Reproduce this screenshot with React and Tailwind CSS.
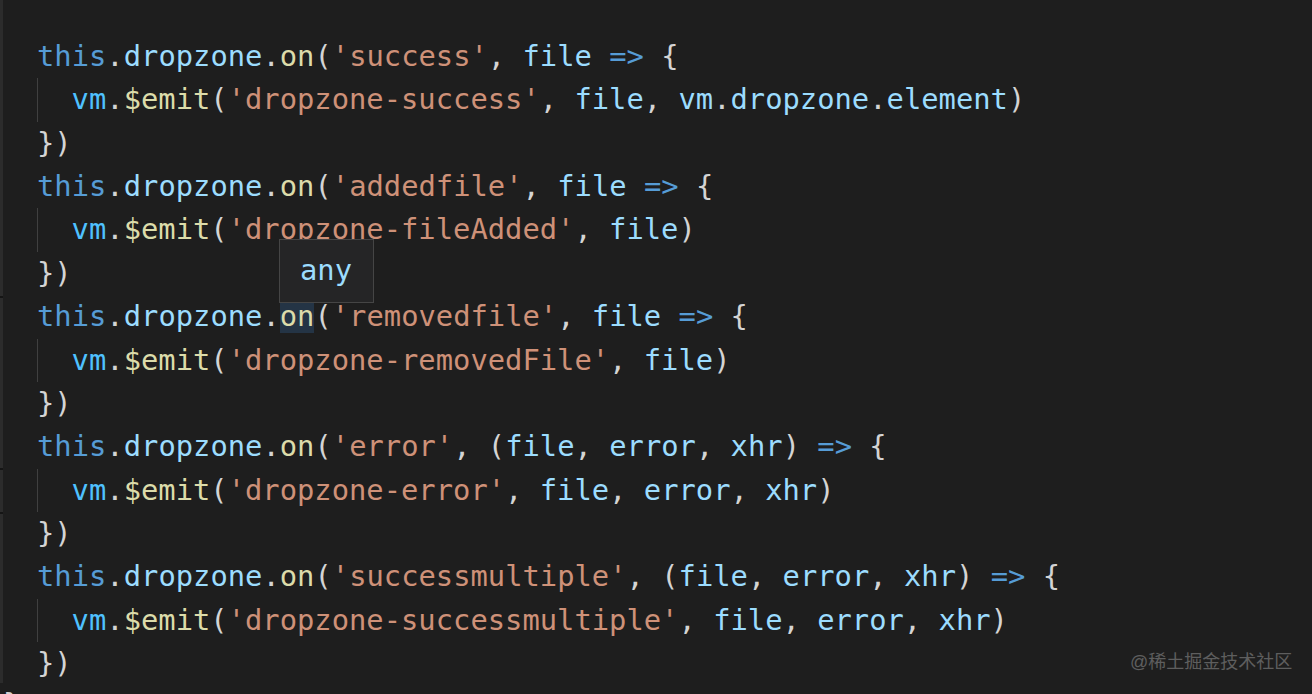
import React from "react";

// token colours (VS Code Dark+)
const C = {
  kw: "text-[#569cd6]",
  prop: "text-[#9cdcfe]",
  fn: "text-[#dcdcaa]",
  str: "text-[#ce9178]",
  punc: "text-[#d4d4d4]",
  cst: "text-[#4fc1ff]",
};

const T = ({ c, children }) => <span className={C[c]}>{children}</span>;

const Head = ({ event, args }) => (
  <div className="h-[43.36px] whitespace-pre">
    <T c="kw">this</T>
    <T c="punc">.</T>
    <T c="prop">dropzone</T>
    <T c="punc">.</T>
    <T c="fn">on</T>
    <T c="punc">(</T>
    <T c="str">'{event}'</T>
    <T c="punc">, </T>
    {args}
    <T c="punc"> </T>
    <T c="kw">=&gt;</T>
    <T c="punc"> {"{"}</T>
  </div>
);

const Body = ({ children }) => (
  <div className="h-[43.36px] whitespace-pre flex">
    <span className="relative w-[34.6px] shrink-0">
      <span className="absolute left-0 top-0 bottom-0 w-px bg-[#404040]" />
    </span>
    <span>
      <T c="cst">vm</T>
      <T c="punc">.</T>
      <T c="fn">$emit</T>
      <T c="punc">(</T>
      {children}
      <T c="punc">)</T>
    </span>
  </div>
);

const Close = () => (
  <div className="h-[43.36px] whitespace-pre">
    <T c="punc">{"})"}</T>
  </div>
);

const triple = (
  <>
    <T c="punc">(</T>
    <T c="prop">file</T>
    <T c="punc">, </T>
    <T c="prop">error</T>
    <T c="punc">, </T>
    <T c="prop">xhr</T>
    <T c="punc">)</T>
  </>
);

const tripleArgs = (
  <>
    <T c="punc">, </T>
    <T c="prop">file</T>
    <T c="punc">, </T>
    <T c="prop">error</T>
    <T c="punc">, </T>
    <T c="prop">xhr</T>
  </>
);

export default function App() {
  return (
    <div className="relative w-[1312px] h-[694px] overflow-hidden bg-[#1e1e1e] font-['DejaVu_Sans_Mono',monospace] text-[28.8px] leading-[43.36px]">
      {/* left gutter strip */}
      <div className="absolute left-0 top-0 w-[3px] h-[683px] flex flex-col">
        <div className="h-[296px] bg-[#2c2c2c]" />
        <div className="h-[2px] bg-[#151515]" />
        <div className="h-[170px] bg-[#2c2c2c]" />
        <div className="h-[2px] bg-[#151515]" />
        <div className="h-[42px] bg-[#2c2c2c]" />
        <div className="h-[2px] bg-[#151515]" />
        <div className="flex-1 bg-[#2c2c2c]" />
      </div>

      <div className="pl-[37px] pt-[35px]">
        <Head event="success" args={<T c="prop">file</T>} />
        <Body>
          <T c="str">'dropzone-success'</T>
          <T c="punc">, </T>
          <T c="prop">file</T>
          <T c="punc">, </T>
          <T c="prop">vm</T>
          <T c="punc">.</T>
          <T c="prop">dropzone</T>
          <T c="punc">.</T>
          <T c="prop">element</T>
        </Body>
        <Close />

        <Head event="addedfile" args={<T c="prop">file</T>} />
        <Body>
          <T c="str">'dropzone-fileAdded'</T>
          <T c="punc">, </T>
          <T c="prop">file</T>
        </Body>
        <Close />

        <div className="h-[43.36px] whitespace-pre">
          <T c="kw">this</T>
          <T c="punc">.</T>
          <T c="prop">dropzone</T>
          <T c="punc">.</T>
          <span className="text-[#dcdcaa] bg-[#243445]">on</span>
          <T c="punc">(</T>
          <T c="str">'removedfile'</T>
          <T c="punc">, </T>
          <T c="prop">file</T>
          <T c="punc"> </T>
          <T c="kw">=&gt;</T>
          <T c="punc"> {"{"}</T>
        </div>
        <Body>
          <T c="str">'dropzone-removedFile'</T>
          <T c="punc">, </T>
          <T c="prop">file</T>
        </Body>
        <Close />

        <Head event="error" args={triple} />
        <Body>
          <T c="str">'dropzone-error'</T>
          {tripleArgs}
        </Body>
        <Close />

        <Head event="successmultiple" args={triple} />
        <Body>
          <T c="str">'dropzone-successmultiple'</T>
          {tripleArgs}
        </Body>
        <Close />
      </div>

      {/* enclosing brace, cut off at the bottom */}
      <div className="absolute left-[3px] top-[683px] text-[#d4d4d4] whitespace-pre">{"}"}</div>

      {/* hover tooltip */}
      <div className="absolute left-[279px] top-[239px] w-[95px] h-[64px] bg-[#252526] border border-[#454545] flex items-center pl-[20px] text-[#9cdcfe]">
        any
      </div>

      {/* watermark */}
      <div className="absolute left-[1130px] top-[650px] text-[18px] leading-[24px] text-[#5e5e5e] font-['Liberation_Sans','Noto_Sans_CJK_SC',sans-serif]">
        @稀土掘金技术社区
      </div>
    </div>
  );
}
